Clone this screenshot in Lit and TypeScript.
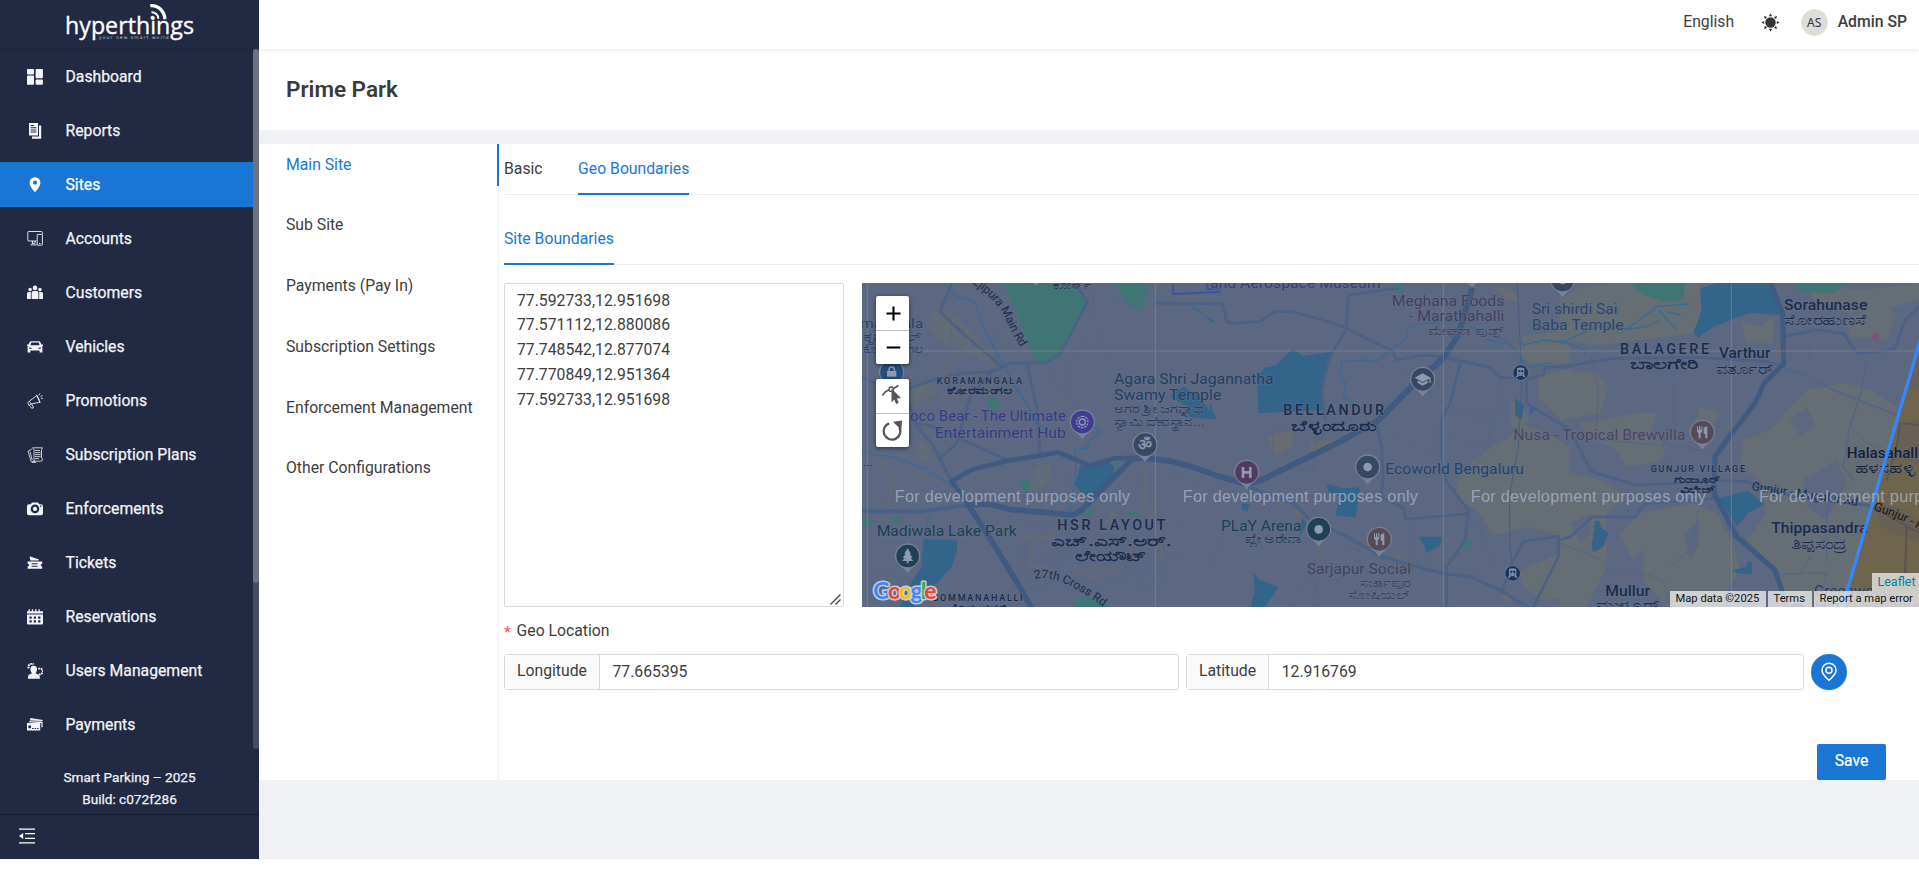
import { LitElement, html, svg, css } from "lit";
import { customElement, state } from "lit/decorators.js";

const glyphs: Record<string, unknown> = {
  dashboard: svg`<rect x="0" y="0" width="7" height="5.4" rx=".8"/><rect x="0" y="6.6" width="7" height="9.2" rx=".8"/><rect x="8.6" y="0" width="7.3" height="9.2" rx=".8"/><rect x="8.6" y="10.6" width="7.3" height="5.2" rx=".8"/>`,
  reports: svg`<path fill-rule="evenodd" d="M2 0h9v12.4H2zM3.6 2h3.2v1H3.6zm0 2.2h5.8v1H3.6zm0 2.2h5.8v1H3.6zm0 2.2h5.8v1H3.6z"/><path d="M12 2.6h2.2v13.2H5v-2.2h7z"/>`,
  pin: svg`<path fill-rule="evenodd" d="M8 .2a5.4 5.4 0 0 0-5.4 5.5C2.6 9.800 8 15.200 8 15.200s5.400-5.400 5.400-9.500A5.400 5.400 0 0 0 8 .2zm0 7.500a2.100 2.100 0 1 1 0-4.200 2.100 2.100 0 0 1 0 4.200z"/>`,
  accounts: svg`<g fill="none" stroke="currentColor" stroke-width=".9"><path d="M9.500 10H1.800a1 1 0 0 1-1-1V1.500a1 1 0 0 1 1-1h12.600a1 1 0 0 1 1 1v1.500"/><rect x="10.200" y="3.400" width="5.200" height="10.800" rx=".6"/><path d="M5.500 10v2.500M9.800 13.900H3.600M8 10v2.400H4.600M12 12.500h1.600"/></g>`,
  customers: svg`<circle cx="8" cy="2.900" r="2.300"/><circle cx="3.100" cy="4.600" r="1.800"/><circle cx="12.900" cy="4.600" r="1.800"/><path d="M4.600 14V7.800q0-1.800 1.600-1.800h3.600q1.600 0 1.600 1.800V14zM0 14V8.700Q0 7 1.500 7h2.300v7zM16 14V8.700Q16 7 14.500 7h-2.300v7z"/>`,
  vehicles: svg`<path fill-rule="evenodd" d="M4 2.200h8q1 0 1.400 1l1 2.400h1.600v1.500h-1l.4 1v5.300h-2.800v-1.800H3.400v1.800H.6V8.100l.4-1H0V5.600h1.600l1-2.400q.4-1 1.400-1zM4.300 3.600 3.500 6.300h9l-.8-2.700zM2.200 8.300v1.500h2.600V8.900zM13.800 8.300v1.500h-2.600V8.900z"/>`,
  promotions: svg`<g fill="none" stroke="currentColor" stroke-width=".85"><path d="M2.200 8.300 10 2.400l2.900 6.900-8.700 1.600zM2.200 8.300l-1.500 1.600 1.300 2.600 2.200-1.600M4.600 11l2 3.700-1.900.6-2.300-3M9.600 1.800l3.600 8M10.700 4.600l1.800 1.800M12 2.200l1-1.800M13.500 3.500l2-1M13.900 5.200l2 .2"/></g>`,
  plans: svg`<g fill="none" stroke="currentColor" stroke-width=".8"><path d="M5.500.8h10l-1 1.800v8.600q1.200 0 1 1.600t-2 1.400H7V2.500zM8 3.500h5M8 5.600h5.600M8 7.600h5.600M8 9.600h5.600M8 11.600h4M4.800 2 1 4.200l3.300 10.700 3.400-.7M3 4.600l2.200 8.400M5 15.400h4"/></g>`,
  camera: svg`<path fill-rule="evenodd" d="M5 1.500h6l1.200 1.800H14q2 0 2 2v7q0 2-2 2H2q-2 0-2-2v-7q0-2 2-2h1.800zM8 3.600a4.300 4.300 0 1 0 0 8.600 4.300 4.300 0 0 0 0-8.600zm0 2.200a2.100 2.100 0 1 1 0 4.200 2.100 2.100 0 0 1 0-4.200zM13 4.500v1.200h1.500V4.500z"/>`,
  tickets: svg`<path fill-rule="evenodd" d="M2.600 1.200 12 4.400l-.4 1H3.200v-1zM.6 6.500h14.600v2.200q-1.500.2-1.500 1.400t1.500 1.400v2.300H.6v-2.300q1.500-.2 1.500-1.400T.6 8.700zM4.600 8.200v1h6v-1zm0 2.500v1h6v-1z"/>`,
  calendar: svg`<path d="M0 4.600V2.300h1.500V.2h1.300v2.100h2V.2h1.300v2.100h2V.2h1.300v2.100h2V.2h1.300v2.100H16v2.300z"/><path fill-rule="evenodd" d="M0 5.600h16v9q0 1-1 1H1q-1 0-1-1zM2.500 7.500v2.300h2.200V7.500zm4.300 0v2.300H9V7.500zm4.300 0v2.300h2.300V7.500zM2.500 11.200v2.300h2.200v-2.300zm4.300 0v2.300H9v-2.300zm4.300 0v2.300h2.300v-2.300z"/>`,
  users: svg`<path d="M3.400 6.200q0-3.400 3.300-3.400t3.300 3.400q0 2.600-1.600 4.100l3.200 1.200q1.300.6 1.300 4.300H.9q0-3.700 1.300-4.300l3-1.200Q3.400 8.800 3.400 6.200z"/><path fill="none" stroke="currentColor" stroke-width="2" stroke-dasharray="1.700 .7" d="M1.700 5.400A3.300 3.300 0 0 1 6.500 1.300M11.300 6a2.900 2.900 0 1 1 .8 5.200"/>`,
  payments: svg`<path d="M3 3.600 3.400.9 15.800 3l-.3 1zM2 4.200l12.600.3q1 0 1 .8v4.600l-1.200.6V6.200L2 5.200z"/><path fill-rule="evenodd" d="M0 6h12.400q.8 0 .8.800v6.800H0zM1.400 8.600v2.600h2.600V8.600zM5 11v1h1.500v-1zm2.500 0v1H9v-1zm2.500 0v1h1.500v-1z"/>`,
};

const navItems: [string, string][] = [
  ["dashboard", "Dashboard"],
  ["reports", "Reports"],
  ["pin", "Sites"],
  ["accounts", "Accounts"],
  ["customers", "Customers"],
  ["vehicles", "Vehicles"],
  ["promotions", "Promotions"],
  ["plans", "Subscription Plans"],
  ["camera", "Enforcements"],
  ["tickets", "Tickets"],
  ["calendar", "Reservations"],
  ["users", "Users Management"],
  ["payments", "Payments"],
];

@customElement("side-nav")
class SideNav extends LitElement {
  @state() active = "Sites";

  static styles = css`
    :host { display: flex; flex-direction: column; width: 259px; height: 859px; flex: none; background: #222943; color: #fff; font-family: Roboto, sans-serif; }
    .brand { height: 49px; flex: none; box-shadow: 0 1px 1px rgba(0, 0, 0, 0.08); }
    .brand svg { display: block; }
    .scroller { height: 700px; flex: none; display: flex; overflow: hidden; }
    .list { width: 253px; padding-top: 5px; display: flex; flex-direction: column; gap: 9px; }
    .item { height: 45px; flex: none; display: flex; align-items: center; padding-left: 27px; gap: 22.500px; font-size: 15.750px; line-height: 20px; color: #f3f4f7; -webkit-text-stroke: 0.25px currentColor; }
    .item.on { background: #1976d5; color: #fff; }
    .item svg { width: 16px; height: 16px; fill: currentColor; flex: none; -webkit-text-stroke: 0; }
    .track { width: 6px; height: 700px; background: #464c62; border-radius: 3px; }
    .thumb { height: 534px; background: #6d7180; border-radius: 3px; }
    .build { height: 65px; flex: none; box-sizing: border-box; padding-top: 17px; text-align: center; font-size: 13.600px; line-height: 22px; color: #f0f1f4; -webkit-text-stroke: 0.25px currentColor; }
    .foot { flex: 1; border-top: 1px solid #171d31; padding: 13px 19px; }
    .foot svg { display: block; }
  `;

  render() {
    return html`
      <div class="brand">
        <svg width="259" height="49" fill="#fff">
          <text x="65" y="33.500" font-family="Open Sans" font-size="23.500" textLength="129" lengthAdjust="spacingAndGlyphs" stroke="#fff" stroke-width=".35">hyperthings</text>
          <text x="99" y="38.800" font-family="DejaVu Sans" font-size="4.400" fill="#c3c6d1" textLength="69.500">your new smart world</text>
          <circle cx="152.500" cy="17.800" r="2" />
          <path d="M151.500 12.200a6.500 6.500 0 0 1 6.800 6.600" fill="none" stroke="#fff" stroke-width="2" />
          <path d="M150.300 5.700a13.500 13.500 0 0 1 14.500 13.600" fill="none" stroke="#fff" stroke-width="3.300" />
        </svg>
      </div>
      <div class="scroller">
        <div class="list">
          ${navItems.map(
            ([icon, label]) => html`<div class="item ${label === this.active ? "on" : ""}">
              <svg viewBox="0 0 16 16">${glyphs[icon]}</svg><span>${label}</span>
            </div>`
          )}
        </div>
        <div class="track"><div class="thumb"></div></div>
      </div>
      <div class="build">Smart Parking – 2025<br />Build: c072f286</div>
      <div class="foot">
        <svg width="16" height="16" fill="#fff"><path d="M0 .4h16v1.300H0zM6 5h10v1.300H6zM6 9.700h10V11H6zM0 14.200h16v1.300H0zM0 8l4.200-3v6z" /></svg>
      </div>
    `;
  }
}

// Map artwork is laid out in three sheets, 1050 units apart, three units to a pixel.
const major = "#405a82";
const minor = "#4c6186";
const lane = "#536589";
const river = "#386b95";
const water = "#33648a";
const green = "#3f7574";
const beige = "#656e74";
const field = "#5d6880";
const ink = "#1b2c4c";

const poly = (fill: string, ...d: string[]) => d.map((p) => svg`<polygon points=${p} fill=${fill} />`);
const line = (stroke: string, w: number, ...d: string[]) =>
  d.map((p) => svg`<polyline points=${p} fill="none" stroke=${stroke} stroke-width=${w} stroke-linejoin="round" stroke-linecap="round" />`);

type Label = [number, number, number, string, number, string, number?];
// x, baseline, drawn length, text, size, colour, weight
const names = (rows: Label[]) =>
  rows.map(
    ([x, y, len, t, size, fill, weight = 400]) =>
      svg`<text x=${x} y=${y} textLength=${len} lengthAdjust=${/^[A-Z ]+$/.test(t) ? "spacing" : "spacingAndGlyphs"} font-size=${size} fill=${fill} font-weight=${weight} paint-order="stroke" stroke="#66738d" stroke-opacity=".55" stroke-width="5" stroke-linejoin="round">${t}</text>`
  );

const marker = (x: number, y: number, fill: string, glyph: unknown) => svg`
  <g transform="translate(${x} ${y})">
    <path d="M0 52C-10 34-38 26-38 0a38 38 0 0 1 76 0C38 26 10 34 0 52z" fill="#76819a" />
    <circle r="34" fill=${fill} />
    <g fill="#8e9ab0" stroke="none">${glyph}</g>
  </g>`;

const fork = svg`<path d="M-16-18h3v11h3v-11h4v11h3v-11h3v15q-2 5-5 6v15h-6V3q-4-1-5-6zM4-14q8-6 11-4v36H9V4H4z"/>`;
const station = (x: number, y: number) => svg`
  <g transform="translate(${x} ${y})"><circle r="25" fill="#66738f" /><circle r="22" fill="#1c3459" />
  <path fill-rule="evenodd" fill="#7d8ba5" d="M-11-13q11-5 22 0v20l4 7H9l-3-5H-6l-3 5h-6l4-7zM-7-8v7h6v-7zM2-8v7h6v-7zM-7 3v3h3V3zM4 3v3h3V3z"/></g>`;

const streets: string[] = [];
for (let i = 0; i < 11; i++) {
  streets.push(`${500 + i * 38},${575 + (i % 3) * 60} ${505 + i * 40},${700 + (i % 2) * 20} ${520 + i * 40},${950 - (i % 4) * 22}`);
}
for (let i = 0; i < 8; i++) {
  streets.push(`${490 + (i % 3) * 30},${730 + i * 29} ${800 + (i % 2) * 60},${742 + i * 27} ${1000 - (i % 3) * 50},${738 + i * 29}`);
  streets.push(`${6 + (i % 2) * 15},${720 + i * 32} ${130 + (i % 3) * 30},${730 + i * 30}`);
  streets.push(`${180 + i * 32},${110 + (i % 3) * 30} ${160 + i * 35},${380 - (i % 2) * 50}`);
  streets.push(`${300 + i * 28},${720 + i * 10} ${370 + i * 18},${800 + i * 22}`);
}

const sheetA = svg`
  ${poly("#616c78", "215,100 260,90 330,150 395,225 385,250 290,205 250,195 200,140", "150,320 210,305 240,330 175,370 145,350", "170,480 215,500 205,545 180,540", "530,560 570,550 575,590 525,640 510,620", "750,700 770,690 760,740 735,730")}
  ${line(lane, 2, ...streets)}
  ${line(lane, 2.5, "700,20 700,120 760,260 886,300 950,320", "700,150 620,260 640,380 720,440", "886,60 960,70 1080,75", "560,250 590,330 640,350", "540,530 530,440 480,330", "886,560 1080,640", "720,40 790,60 845,100", "60,430 50,520 100,600 70,690", "20,250 100,320 60,430")}
  ${line("#67696f", 6, "245,95 310,150 400,230 395,265", "320,180 265,250 250,320", "125,335 195,310 205,350 130,385", "240,352 330,350", "50,525 95,590 85,680", "160,590 240,605", "490,770 580,770", "515,770 515,860 560,862 550,910", "700,750 700,870 770,870", "855,560 855,690 880,720 890,640", "905,740 905,830 850,810", "590,740 540,800", "535,430 540,520", "640,870 720,900")}
  ${poly(green, "425,9 642,9 683,65 600,220 570,247 530,247 500,180 470,90", "760,9 867,9 845,95 795,60", "375,375 395,348 418,365 418,392", "483,602 510,600 505,640 490,630", "755,565 762,545 800,538", "660,705 698,682 697,710", "640,965 665,950 720,960 750,981 645,981", "805,695 832,693 832,708 808,710", "95,712 118,708 118,730 98,728", "10,720 30,712 35,735 15,740", "120,215 150,215 150,260 130,255")}
  ${poly(water, "662,555 700,560 745,545 762,560 760,600 690,650 660,635 645,612", "190,778 290,780 292,810 275,860 230,910 180,940 165,981 120,981 140,930 165,890 185,860", "930,350 970,320 1020,350 1066,418 985,412 985,380")}
  ${line(river, 4, "250,9 290,50 345,65 365,130 400,200 440,270 470,330 505,375 530,430 560,450", "700,440 722,455 690,480 680,505 645,505 648,560 640,640 630,700", "6,510 40,525 100,530 200,570 280,620", "990,75 1020,95 1062,130", "205,710 200,740 195,780")}
  ${line(minor, 8, "275,603 215,490 170,440 140,350", "300,280 400,275 450,250 560,248 600,222 683,65 645,9", "440,540 330,490 205,435 170,430", "275,9 240,95 320,170 420,255", "400,270 330,350 290,490 245,530", "130,345 160,320 220,300 300,282", "6,293 60,315 130,345", "500,250 530,380 540,520", "885,70 1000,70 1080,72")}
  ${line(minor, 13, "6,693 180,695 325,675")}
  ${line(major, 14, "325,675 275,603 338,568 440,543 595,517 690,557 765,535 850,533")}
  ${line(major, 17, "325,675 385,672 450,688 640,705 665,690 815,538 850,533 940,545 1000,562 1080,590", "325,675 390,775 470,905 515,985")}
  ${line("#3b55a0", 6, "938,9 940,42 1080,36", "1042,9 1042,28 1080,26")}
`;

const sheetB = svg`
  ${poly(beige, "865,490 900,475 930,430 1000,455 1080,500 1080,780 1040,765 960,740 850,765 800,690 740,655 745,590 790,545 830,510", "985,290 1080,265 1080,410 1040,405 985,355", "925,170 1080,150 1080,250 960,250 925,230", "930,870 1045,822 1080,830 1080,950 1000,960 940,920", "900,370 925,360 960,420 905,445")}
  ${poly("#676c70", "170,470 250,450 245,500 190,530", "300,485 370,480 345,520 300,510", "850,20 910,30 935,70 890,60", "870,940 915,935 905,965 880,960", "520,830 580,825 560,845", "250,690 275,690 275,730")}
  ${poly(water, "248,208 280,228 365,215 335,310 340,390 145,400 142,290 165,262 195,258", "350,612 400,625 450,622 437,712 377,708 388,650 355,635", "915,355 942,375 935,420 915,405", "960,380 972,392 960,405", "625,770 697,770 690,795 650,820 640,790", "130,880 150,900 205,922 165,981 122,981 135,930", "95,670 118,672 112,693 95,688", "275,705 290,730 270,770", "0,370 18,418 0,415", "0,112 14,128 0,125")}
  ${poly(green, "560,9 583,9 578,36 547,32", "765,775 783,780 778,810 757,803")}
  ${line(lane, 2.5, "200,440 320,430 310,580", "500,450 570,460 600,490 690,530", "700,400 840,415 840,500 700,470", "640,380 700,250", "580,260 600,300 570,340", "210,620 250,570 320,575", "190,445 190,530", "330,780 320,900 310,981", "330,860 250,950 240,981", "600,720 600,850", "780,720 830,780 840,860 770,870", "770,700 810,740 815,800", "870,300 860,420 800,560", "720,380 860,400", "0,640 60,700 30,780 0,860", "400,800 450,810 450,860")}
  ${line("#485c82", 3, "922,9 930,180 935,320 925,500 898,650 900,800 912,890")}
  ${line("#67696f", 6, "370,750 430,780 480,800", "330,800 325,850", "250,690 300,730", "775,12 800,40 790,60")}
  ${line(river, 4, "800,125 700,125 640,130 590,145 595,170 540,210 500,245 470,240 395,245 390,280 405,310 400,350 430,370", "780,140 880,180 920,210 945,255", "830,180 880,190", "930,180 940,195 1000,180 1080,190", "945,265 1020,248")}
  ${line(minor, 8, "0,70 38,72 50,125 65,130 150,125 195,95 250,95 320,115 400,140 550,215 558,240 640,225 700,232 840,262 870,292 960,295 1000,285 1005,262 1080,258", "560,25 415,45 408,150 360,230 335,330 345,420", "500,435 515,500 520,600 510,650 583,685 585,717 770,702", "750,250 720,370 693,420 693,520 705,600 775,690 765,780 710,860 710,981", "1080,785 1045,768 940,785 905,850 875,940", "1045,770 1045,830 970,981", "950,290 950,370 1080,450")}
  ${line(minor, 10, "115,620 250,670 300,720 390,760 520,830 620,860 700,880 780,890 870,930 960,985")}
  ${line(major, 18, "30,590 110,612 155,600 380,490 500,425 600,325 700,235 745,165 785,30")}
`;

const sheetC = svg`
  ${poly(beige, "0,60 60,20 160,9 480,9 400,160 200,185 110,195 0,180", "740,9 900,30 1077,9 1077,60 1000,80 860,100 760,60", "550,480 630,450 740,330 860,310 930,330 1010,380 1000,500 960,640 930,720 850,981 660,981 640,860 560,780 620,700 600,600 540,560", "0,270 110,280 145,320 120,400 0,420", "230,400 290,400 270,450 320,500 300,545 200,560 170,510 95,475 60,430", "540,120 600,140 640,110 640,190 560,190", "0,570 120,600 200,650 140,700 140,860 80,981 0,981", "180,760 240,700 400,670 470,700 520,790 540,870 470,981 320,981 240,890", "860,120 960,70 1010,100 980,180 870,170", "420,380 480,400 440,460 400,440")}
  ${poly(field, "30,730 95,700 90,760 60,790", "370,760 420,720 415,800 390,840", "730,600 830,540 860,610 800,720 740,680", "150,880 250,810 250,900 180,940", "560,900 640,890 640,981 560,981", "690,420 740,380 770,440 720,470")}
  ${poly(water, "420,25 470,9 630,9 665,105 570,98 460,140 415,172 400,160 425,90", "475,655 565,632 612,672 565,700 530,740", "105,722 120,722 122,742 146,760 130,800 100,817 95,800", "518,870 560,860 562,845 575,845 575,882 530,880")}
  ${poly(green, "210,9 375,9 370,60 310,65 250,45", "705,9 860,9 820,40 710,35")}
  ${poly("#75567b", "935,165 942,158 957,160 955,192 937,178")}
  ${line(lane, 3, "300,270 340,310 340,420 310,500 340,600", "90,230 115,330 110,450", "120,480 300,495 465,515", "870,440 920,490 950,500", "0,790 130,840 140,870 250,880 310,900 330,981", "330,860 400,800 415,690", "1040,720 1040,880", "720,880 800,880 780,960", "750,830 720,880 650,885", "960,250 980,210", "690,200 690,240 745,240 750,180", "800,700 800,850", "60,180 100,240")}
  ${line(river, 4, "0,190 110,140 205,145 290,80 385,72", "295,90 350,150", "190,150 260,140 295,125", "0,182 75,210 75,225", "320,95 360,105")}
  ${line(lane, 5, "672,262 740,290 820,330 1077,432", "920,245 905,330 870,440 850,560 880,600", "800,700 815,650")}
  ${line(minor, 8, "670,170 770,150 850,160 890,220 960,215 1005,205 1035,120 1077,80", "0,262 160,235 420,232 620,245 672,258", "45,480 95,575 230,615 340,610 460,600 560,605 700,650 920,675 1077,745", "0,780 30,770 100,710 225,712 255,672 460,655")}
  ${line("#67696f", 6, "650,195 665,195 665,222 650,222 650,195", "500,450 502,452")}
  ${line(major, 15, "630,5 668,100 670,215 672,250 612,310 585,370 500,480 465,530 462,640 530,770 645,870 668,940 680,985")}
  <g>
    <polygon points="1080,183 848,985 1080,985" fill="#6f644c" />
    <polygon points="1080,183 1038,330 1080,325" fill="#67605f" />
    ${poly("#686054", "1020,430 1080,420 1080,560 1010,520", "950,665 1050,690 1080,740 1080,790 960,740")}
    ${line("#575356", 5, "1030,430 1077,435", "1020,430 1010,500 980,600", "935,680 1080,760", "1040,740 1035,880 980,981")}
  </g>
`;

const purple = "#363a86";
const labels = svg`
  <g>
    ${names([
      [0, 143, 190, "madivala", 40, "#24446f"],
      [8, 183, 182, "ಕೃಷ್ಣಪಲ್", 36, "#24446f"],
      [8, 218, 182, "ಕೋರಮಂಗಲ", 36, "#24446f"],
      [578, 26, 115, "ಕೋರ್ಸ್", 34, "#243858"],
      [230, 312, 256, "KORAMANGALA", 27, "#1e3051", 500],
      [262, 343, 192, "ಕೋರಮಂಗಲ", 30, "#1e3051", 600],
      [150, 424, 468, "oco Bear - The Ultimate", 42, purple],
      [225, 473, 392, "Entertainment Hub", 42, purple],
      [762, 312, 479, "Agara Shri Jagannatha", 42, "#243d60"],
      [762, 360, 322, "Swamy Temple", 42, "#243d60"],
      [762, 400, 270, "ಅಗರ ಶ್ರೀ ಜಗನ್ನಾಥ", 36, "#243d60"],
      [762, 438, 272, "ಸ್ವಾಮಿ ದೇವಸ್ಥಾನ...", 36, "#243d60"],
      [50, 768, 420, "Madiwala Lake Park", 42, "#1a3f55"],
      [592, 751, 324, "HSR LAYOUT", 43, ink, 500],
      [572, 799, 364, "ಎಚ್.ಎಸ್.ಅರ್.", 42, ink, 600],
      [645, 844, 216, "ಲೇಯೌಟ್", 42, ink, 600],
      [218, 963, 270, "BOMMANAHALLI", 27, "#182a4a", 500],
      [258, 996, 185, "ಬೊಮ್ಮನಹಳ್ಳಿ", 32, "#182a4a", 600],
      [10, 557, 28, "...", 34, ink],
    ])}
    <path id="ejipura" d="M336 10Q412 60 436 115T484 205" fill="none" />
    <text font-size="36" fill=${ink}><textPath href="#ejipura" textLength="245">Ejipura Main Rd</textPath></text>
    <path id="cross27" d="M524 897Q600 880 735 985" fill="none" />
    <text font-size="36" fill=${ink}><textPath href="#cross27" textLength="228">27th Cross Rd</textPath></text>
  </g>
  <g transform="translate(1050 0)">
    ${names([
      [0, 24, 512, "and Aerospace Museum", 42, purple],
      [545, 77, 338, "Meghana Foods", 42, "#42405c"],
      [597, 124, 286, "- Marathahalli", 42, "#42405c"],
      [655, 164, 228, "ಮೇಘನಾ ಫುಡ್ಸ್", 36, "#42405c"],
      [965, 102, 258, "Sri shirdi Sai", 42, "#2c4469"],
      [965, 149, 276, "Baba Temple", 42, "#2c4469"],
      [220, 406, 302, "BELLANDUR", 43, ink, 500],
      [243, 452, 254, "ಬೆಳ್ಳಂದೂರು", 42, ink, 600],
      [526, 581, 416, "Ecoworld Bengaluru", 42, "#24436c"],
      [33, 752, 241, "PLaY Arena", 42, "#1a3f55"],
      [104, 790, 170, "ಪ್ಲೇ ಅರೇನಾ", 36, "#1a3f55"],
      [290, 881, 313, "Sarjapur Social", 42, "#42405c"],
      [450, 920, 153, "ಸರ್ಜಾಪುರ", 36, "#42405c"],
      [415, 956, 188, "ಸೋಷಿಯಲ್", 36, "#42405c"],
      [910, 479, 516, "Nusa - Tropical Brewvilla", 42, "#4c4460"],
    ])}
  </g>
  <g transform="translate(2100 0)">
    ${names([
      [672, 90, 250, "Sorahunase", 42, ink, 500],
      [672, 134, 247, "ಸೋರಹುಣಸೆ", 42, ink],
      [180, 221, 267, "BALAGERE", 43, ink, 500],
      [210, 266, 205, "ಬಾಲಗೇರಿ", 42, ink, 600],
      [477, 235, 154, "Varthur", 42, ink, 500],
      [467, 281, 173, "ವರ್ತೂರ್", 42, ink],
      [272, 577, 283, "GUNJUR VILLAGE", 27, "#1e3051", 500],
      [341, 608, 138, "ಗುಂಜೂರ್", 30, "#1e3051", 600],
      [359, 640, 108, "ವಿಲೇಜ್", 30, "#1e3051", 600],
      [860, 535, 226, "Halasahalli", 42, "#141f33", 500],
      [884, 580, 182, "ಹಳಸಹಳ್ಳಿ", 42, "#141f33"],
      [634, 760, 288, "Thippasandra", 42, ink, 500],
      [692, 806, 170, "ತಿಪ್ಪಸಂದ್ರ", 42, ink],
      [136, 948, 134, "Mullur", 42, ink, 500],
      [108, 990, 190, "ಮುಳ್ಳೂರ್", 42, ink],
      [762, 947, 232, "Greenwood", 42, "#323a4a"],
      [765, 992, 320, "High - Sarjapur", 42, "#323a4a"],
    ])}
    <path id="gunjur" d="M574 630Q730 655 910 680" fill="none" />
    <text font-size="36" fill=${ink}><textPath href="#gunjur" textLength="322">Gunjur - Mugalur Rd</textPath></text>
    <path id="gunjur2" d="M940 690Q1010 710 1100 760" fill="none" />
    <text font-size="36" fill="#10141c"><textPath href="#gunjur2">Gunjur - M</textPath></text>
  </g>
`;

const pins = svg`
  ${marker(95, 277, "#234f7e", svg`<path fill="none" stroke="#8e9ab0" stroke-width="4" d="M-8-2v-6a8 8 0 0 1 16 0v6"/><path d="M-14-4h28v17h-28z"/>`)}
  ${marker(667, 426, "#3f3c92", svg`<path fill="none" stroke="#8e9ab0" stroke-width="4" stroke-dasharray="7 3" d="M0-17a17 17 0 1 1-.1 0z"/><circle r="9" fill="none" stroke="#8e9ab0" stroke-width="4"/>`)}
  ${marker(855, 494, "#374863", svg`<text x="0" y="16" font-size="46" text-anchor="middle" font-family="Noto Sans" stroke="#8e9ab0" stroke-width="1.500">ॐ</text>`)}
  ${marker(143, 828, "#1f4153", svg`<path d="M0-23 10-7H6l9 13H9l8 9H3v7h-6v-7h-14l8-9h-6l9-13h-4z"/>`)}
  ${marker(1160, 577, "#523b5e", svg`<path d="M-15-16h8V-4H7v-12h8v33H7V4H-7v13h-8z"/>`)}
  ${marker(1688, 298, "#374863", svg`<path d="M0-18 24-5v16h-4V-2L0 8-24-5zM-15 3 0 11 15 3v8L0 19l-15-8z"/>`)}
  ${marker(1523, 561, "#374863", svg`<circle r="13"/>`)}
  ${marker(1376, 748, "#1f4153", svg`<circle r="13"/>`)}
  ${marker(1558, 778, "#564a55", fork)}
  ${marker(2527, 457, "#564a57", fork)}
  ${marker(2108, 0, "#374863", svg`<circle r="13"/>`)}
  ${marker(1836, -28, "#374863", svg`<circle r="13"/>`)}
  ${marker(527, -34, "#374863", svg`<circle r="13"/>`)}
  ${marker(2812, 1002, "#374863", svg`<circle r="13"/>`)}
  ${station(1982, 278)} ${station(1958, 880)}
`;

@customElement("site-map")
class SiteMap extends LitElement {
  static styles = css`
    :host { display: block; position: relative; width: 1057px; height: 324px; overflow: hidden; font-family: Roboto, sans-serif; }
    .canvas { display: block; font-family: Roboto, "Noto Sans", sans-serif; }
    .controls { position: absolute; left: 14px; top: 13px; display: flex; flex-direction: column; gap: 15px; }
    .bar { width: 33px; height: 68px; background: #fff; border-radius: 2px; box-shadow: 0 1px 4px rgba(0, 0, 0, 0.55); display: flex; flex-direction: column; }
    .bar svg { display: block; width: 33px; height: 34px; box-sizing: border-box; }
    .bar svg + svg { border-top: 1px solid #bdbdbd; }
    .leaflet { position: absolute; right: 0; top: 290px; width: 47px; height: 18px; box-sizing: border-box; padding-left: 5.500px; background: #cfccc5; color: #0b7ba6; font-size: 12.500px; line-height: 18px; }
    .credits { position: absolute; right: 0; bottom: 0; display: flex; gap: 2px; font-size: 11.200px; line-height: 16px; color: #111; }
    .credits span { background: rgba(245, 245, 245, 0.73); white-space: nowrap; box-sizing: border-box; height: 16px; }
    .data { width: 96px; padding-left: 5.500px; }
    .terms { width: 44px; padding-left: 5.500px; }
    .error { width: 105px; padding-left: 5.500px; }
  `;

  render() {
    return html`
      <svg class="canvas" width="1057" height="324" viewBox="6 9 3171 972">
        <rect x="6" y="9" width="3171" height="972" fill="#5c6881" />
        <g>${sheetA}</g>
        <g transform="translate(1050 0)">${sheetB}</g>
        <g transform="translate(2100 0)">${sheetC}</g>
        <path d="M6 213H3177M22 9V981M886 9V981M1750 9V981M2614 9V981" stroke="#7f8ba2" stroke-opacity=".6" stroke-width="3" />
        ${labels} ${pins}
        <line x1="3181" y1="180" x2="2946" y2="985" stroke="#3388ff" stroke-width="10" />
        ${[104, 968, 1832, 2697].map(
          (x) => svg`<text x=${x} y="665" font-family="Liberation Sans" font-size="49" textLength="706" fill="#a3adc2" fill-opacity=".85">For development purposes only</text>`
        )}
        <text x="40" y="956" font-family="Lato" font-size="69" font-weight="700" textLength="190" paint-order="stroke" stroke="#c9cddb" stroke-width="9" stroke-linejoin="round"><tspan fill="#4285f4">G</tspan><tspan fill="#ea4335">o</tspan><tspan fill="#fbbc04">o</tspan><tspan fill="#4285f4">g</tspan><tspan fill="#34a853">l</tspan><tspan fill="#ea4335">e</tspan></text>
      </svg>
      <div class="controls">
        <div class="bar">
          <svg viewBox="0 0 33 34"><path d="M10.500 17.500h14M17.500 10.500v14" stroke="#000" stroke-width="2.100" /></svg>
          <svg viewBox="0 0 33 34"><path d="M10.500 17h14" stroke="#000" stroke-width="2.100" /></svg>
        </div>
        <div class="bar">
          <svg viewBox="0 0 33 34" fill="#555"><path d="M6.500 16.500Q9 12 13 11M17.500 9.500l5-3" fill="none" stroke="#555" stroke-width="1.600" /><circle cx="15.200" cy="10.200" r="2.200" fill="none" stroke="#555" stroke-width="1.400" /><path d="M15.500 9.500 25 19l-4.200.5 2 4.300-2.600 1.200-2-4.400-2.700 3z" /></svg>
          <svg viewBox="0 0 33 34"><path d="M13 9.700a8.600 8.600 0 1 0 10.600 4.200" fill="none" stroke="#555" stroke-width="2.400" /><path d="M17 8 26.300 6.800 25.600 16.500z" fill="#555" /></svg>
        </div>
      </div>
      <div class="leaflet">Leaflet</div>
      <div class="credits"><span class="data">Map data ©2025</span><span class="terms">Terms</span><span class="error">Report a map error</span></div>
    `;
  }
}

@customElement("app-root")
class AppRoot extends LitElement {
  static styles = css`
    :host { display: flex; height: 870px; overflow: hidden; background: #fff; font-family: Roboto, sans-serif; font-size: 15.750px; line-height: 24.750px; color: #3d3d3d; }
    .page { flex: 1; min-width: 0; height: 859px; background: #eff1f5; display: flex; flex-direction: column; }
    .top { height: 49px; flex: none; background: #fff; box-shadow: 0 1px 5px rgba(0, 21, 41, 0.1); position: relative; box-sizing: border-box; padding: 9px 12px 0 0; display: flex; justify-content: flex-end; }
    .lang { margin: 1px 27px 0 0; }
    .sun { margin: 4px 20.500px 0 0; width: 19px; height: 19px; }
    .avatar { width: 27px; height: 27px; box-sizing: border-box; border-radius: 50%; border: 1px solid #e4e6c0; background: #dcdcdc; color: #333; font: 12px/25px "Noto Sans", sans-serif; text-align: center; margin-right: 10px; }
    .user { font-weight: 500; margin-top: 1px; }
    .title { height: 81px; flex: none; background: #fff; box-sizing: border-box; padding: 23px 27px; font-size: 22.500px; font-weight: 600; line-height: 34px; color: #3a3a3a; }
    .body { margin-top: 14px; height: 636px; flex: none; background: #fff; display: flex; }
    .sections { width: 239px; border-right: 1px solid #efefef; display: flex; flex-direction: column; gap: 18px; height: 636px; }
    .section { height: 42.750px; flex: none; box-sizing: border-box; padding: 8.600px 0 0 27px; margin-right: -1px; }
    .section.on { color: #1976d5; border-right: 2px solid #1976d5; height: 42px; margin-bottom: 0.750px; padding-top: 9px; }
    .panel { flex: 1; min-width: 0; padding-left: 5px; display: flex; flex-direction: column; }
    .tabs { display: flex; gap: 35.500px; border-bottom: 1px solid #efefef; box-sizing: border-box; }
    .tab { box-sizing: border-box; margin-bottom: -1px; border-bottom: 2px solid transparent; }
    .tab.on { color: #1976d5; border-color: #1976d5; }
    .tabs.main { height: 51px; padding-top: 13px; }
    .tabs.sub { height: 70px; padding-top: 32px; }
    .geo { display: flex; margin-top: 18px; gap: 18px; }
    .area { position: relative; width: 340px; height: 324px; flex: none; }
    textarea { width: 340px; height: 324px; box-sizing: border-box; margin: 0; border: 1px solid #d9d9d9; border-radius: 2px; padding: 4.500px 12px; font: inherit; color: inherit; resize: none; outline: none; display: block; }
    .grip { position: absolute; right: 3px; bottom: 2px; }
    .label { margin-top: 11px; line-height: 25px; display: flex; }
    .star { color: #ff4d4f; font-family: "Liberation Sans", sans-serif; width: 12.600px; font-size: 18px; padding-top: 3px; height: 22px; }
    .coords { display: flex; margin-top: 11px; gap: 7px; }
    .group { display: flex; height: 36px; box-sizing: border-box; border: 1px solid #d9d9d9; border-radius: 3px; }
    .group.lon { width: 675px; }
    .group.lat { width: 618px; }
    .addon { background: #fafafa; border-right: 1px solid #d9d9d9; padding: 4px 11.800px 0 12px; }
    .value { padding: 5px 12.800px 0; }
    .locate { width: 36px; height: 36px; border-radius: 50%; background: #1976d5; display: flex; align-items: center; justify-content: center; box-shadow: 0 2px 0 rgba(0, 0, 0, 0.045); }
    .actions { margin-top: 54px; padding-right: 33px; display: flex; justify-content: flex-end; }
    .save { width: 69px; height: 36px; box-sizing: border-box; padding-top: 5px; background: #1976d5; color: #fff; border-radius: 2px; text-align: center; -webkit-text-stroke: 0.2px #fff; }
  `;

  render() {
    const sections = ["Main Site", "Sub Site", "Payments (Pay In)", "Subscription Settings", "Enforcement Management", "Other Configurations"];
    const points = ["77.592733,12.951698", "77.571112,12.880086", "77.748542,12.877074", "77.770849,12.951364", "77.592733,12.951698"].join("\n");
    return html`
      <side-nav></side-nav>
      <div class="page">
        <div class="top">
          <span class="lang">English</span>
          <svg class="sun" viewBox="-9.500 -9.500 19 19" fill="#333">
            <circle r="5.200" />
            ${[0, 45, 90, 135, 180, 225, 270, 315].map((a) => svg`<path d="M-1.600-6.300h3.200L0-9.200z" transform="rotate(${a})" />`)}
          </svg>
          <span class="avatar">AS</span>
          <span class="user">Admin SP</span>
        </div>
        <div class="title">Prime Park</div>
        <div class="body">
          <div class="sections">
            ${sections.map((s, i) => html`<div class="section ${i === 0 ? "on" : ""}">${s}</div>`)}
          </div>
          <div class="panel">
            <div class="tabs main"><div class="tab">Basic</div><div class="tab on">Geo Boundaries</div></div>
            <div class="tabs sub"><div class="tab on">Site Boundaries</div></div>
            <div class="geo">
              <div class="area">
                <textarea .value=${points}></textarea>
                <svg class="grip" width="11" height="11" viewBox="0 0 11 11" stroke="#444" stroke-width="1.400"><path d="M.5 10.500l10-10M5.500 10.500l5-5" /></svg>
              </div>
              <site-map></site-map>
            </div>
            <div class="label"><span class="star">*</span>Geo Location</div>
            <div class="coords">
              <div class="group lon"><span class="addon">Longitude</span><span class="value">77.665395</span></div>
              <div class="group lat"><span class="addon">Latitude</span><span class="value">12.916769</span></div>
              <div class="locate">
                <svg width="18" height="20" viewBox="0 0 18 20" fill="none" stroke="#fff" stroke-width="1.500"><path d="M9 18.300C5 14.800 2 11.700 2 8.200a7 7 0 0 1 14 0c0 3.500-3 6.600-7 10.100z" /><circle cx="9" cy="8.200" r="3" /></svg>
              </div>
            </div>
            <div class="actions"><div class="save">Save</div></div>
          </div>
        </div>
      </div>
    `;
  }
}
